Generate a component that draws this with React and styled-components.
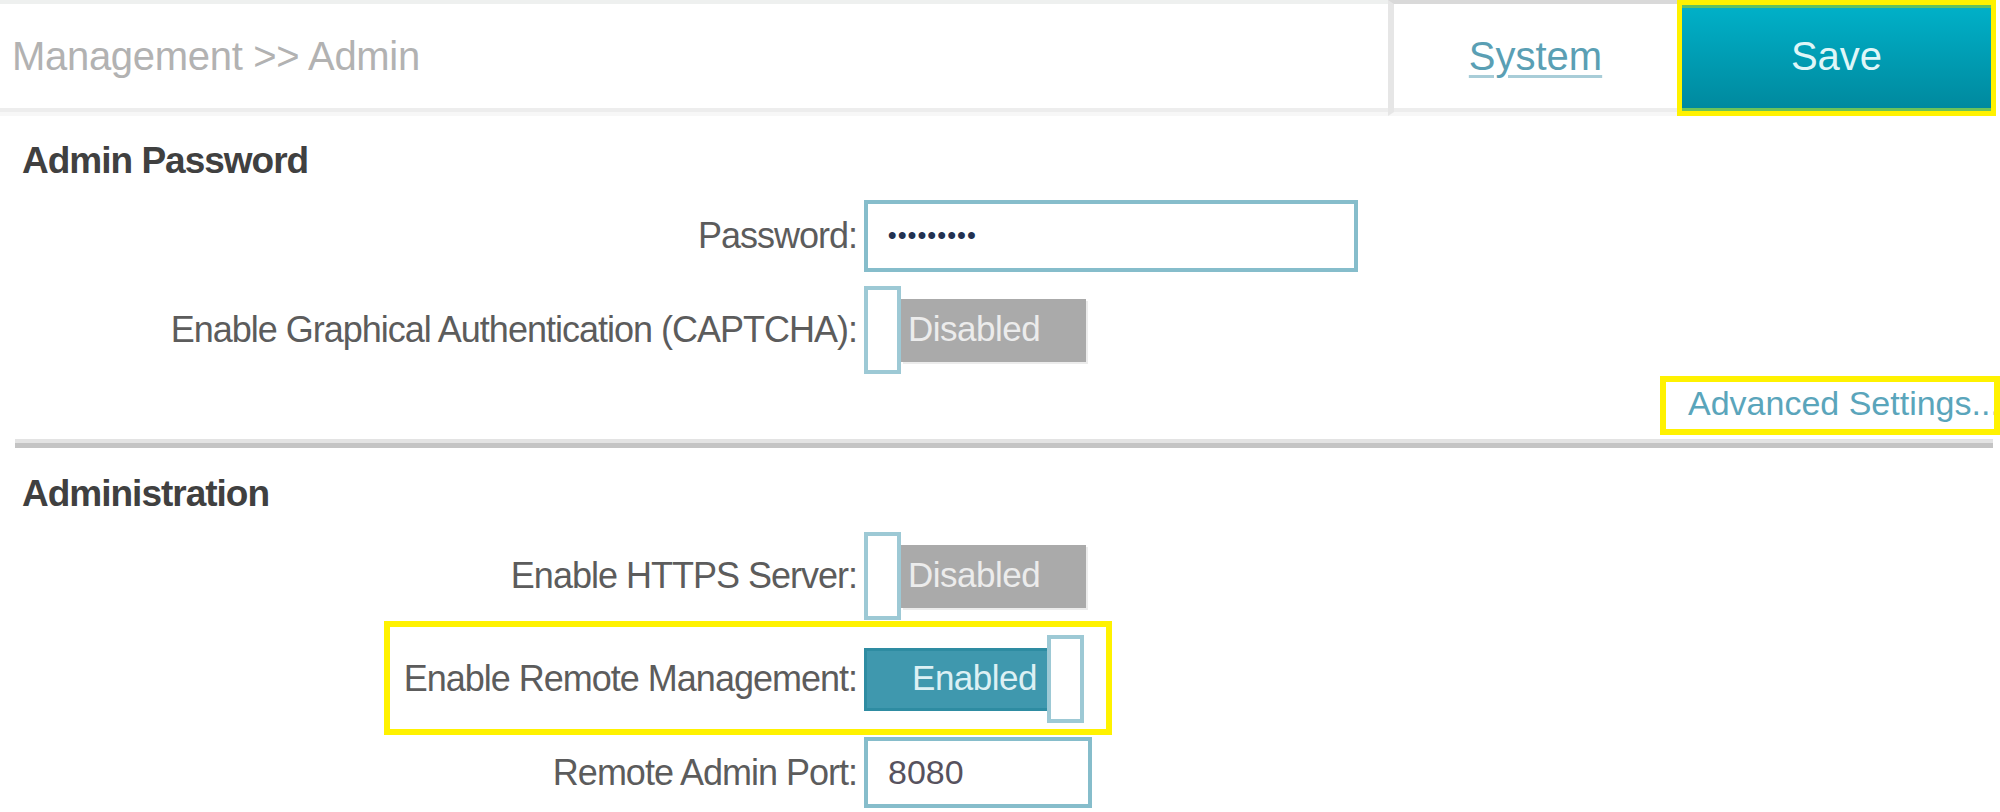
import React from "react";
import styled, { createGlobalStyle } from "styled-components";

const GlobalStyle = createGlobalStyle`
  * { box-sizing: border-box; }
  html, body { margin: 0; padding: 0; background: #fff; }
  body { font-family: "Liberation Sans", Arial, sans-serif; }
`;

const Page = styled.div`
  width: 2000px;
  height: 812px;
  overflow: hidden;
  background: #fff;
`;

const TopBar = styled.div`
  display: flex;
  height: 116px;
  padding-right: 4px;
`;

const Crumb = styled.div`
  flex: 1;
  display: flex;
  align-items: center;
  padding: 0 0 4px 12px;
  border-top: 4px solid #eef0ef;
  border-bottom: 4px solid #f7f7f7;
  box-shadow: inset 0 -4px 0 #ededed;
  font-size: 40px;
  color: #b2b2b2;
  letter-spacing: -0.3px;
`;

const SystemTab = styled.div`
  width: 289px;
  display: flex;
  align-items: center;
  justify-content: center;
  padding-bottom: 4px;
  border-top: 4px solid #d9d9d9;
  border-left: 6px solid #e6e6e6;
  border-bottom: 4px solid #f7f7f7;
  box-shadow: inset 0 -4px 0 #ededed;
`;

const TabLink = styled.a`
  font-size: 40px;
  color: #5a9fb4;
  text-decoration: underline;
  text-decoration-color: #a8cdd8;
  text-underline-offset: 5px;
  text-decoration-thickness: 3px;
`;

const SaveButton = styled.button`
  width: 319px;
  margin: 0;
  padding: 0 0 4px;
  border: 5px solid #fff200;
  background: linear-gradient(#00b1c9, #00889d);
  box-shadow: inset 0 3px 0 #62c15f, inset 0 -3px 0 #6cc35a;
  color: #dff6f8;
  font-family: inherit;
  font-size: 40px;
  cursor: pointer;
`;

const SectionTitle = styled.h2`
  margin: ${(p) => p.$top}px 0 0 22px;
  font-size: 37px;
  line-height: 40px;
  font-weight: bold;
  color: #404040;
  letter-spacing: -1px;
`;

const Row = styled.div`
  display: flex;
  align-items: center;
  margin-top: ${(p) => p.$top}px;
`;

const Label = styled.label`
  width: ${(p) => p.$w || 864}px;
  padding-right: 7px;
  text-align: right;
  font-size: 36px;
  letter-spacing: -1px;
  color: #5c5c5c;
  white-space: nowrap;
`;

const Field = styled.div`
  width: ${(p) => p.$w}px;
  height: ${(p) => p.$h}px;
  display: flex;
  align-items: center;
  padding-left: 20px;
  border: 4px solid #86bdcb;
  font-size: 34px;
  color: #57525e;
`;

const Dots = styled.span`
  font-size: 24px;
  font-weight: bold;
  letter-spacing: 1.5px;
  color: #233150;
  padding-bottom: 3px;
`;

const Toggle = styled.div`
  display: flex;
  align-items: center;
`;

const Knob = styled.span`
  position: relative;
  z-index: 1;
  flex: none;
  width: 37px;
  height: 88px;
  margin-left: ${(p) => (p.$on ? -5 : 0)}px;
  border: 4px solid #9dc9d5;
  background: #fff;
`;

const Track = styled.span`
  flex: none;
  width: ${(p) => (p.$on ? 188 : 185)}px;
  height: 63px;
  display: flex;
  align-items: center;
  justify-content: ${(p) => (p.$on ? "flex-end" : "flex-start")};
  padding: ${(p) => (p.$on ? "0 12px 2px 0" : "0 0 2px 7px")};
  background: ${(p) => (p.$on ? "#3f98ae" : "#aaaaaa")};
  border: ${(p) => (p.$on ? "3px solid #2e8ca2" : "none")};
  box-shadow: ${(p) => (p.$on ? "none" : "2px 2px 0 0 #ececec")};
  font-size: 35px;
  letter-spacing: -0.5px;
  color: ${(p) => (p.$on ? "#dcf0f4" : "#ececec")};
`;

const LinkRow = styled.div`
  display: flex;
  justify-content: flex-end;
  margin-top: 2px;
`;

const AdvBox = styled.div`
  width: 340px;
  height: 59px;
  display: flex;
  align-items: center;
  padding: 0 0 4px 22px;
  border: 6px solid #fff200;
  overflow: hidden;
  white-space: nowrap;
`;

const AdvLink = styled.a`
  font-size: 34px;
  color: #5aa5bb;
  text-decoration: none;
`;

const Divider = styled.hr`
  height: 9px;
  margin: 4px 7px 0 15px;
  border: none;
  border-top: 4px solid #e3e3e3;
  background: #c4c4c4;
`;

const Highlight = styled.div`
  display: flex;
  align-items: center;
  width: fit-content;
  margin: 1px 0 0 384px;
  padding: 8px 22px 6px 0;
  border: 6px solid #fff200;
`;

const Switch = ({ on }) => (
  <Toggle>
    {!on && <Knob />}
    <Track $on={on}>{on ? "Enabled" : "Disabled"}</Track>
    {on && <Knob $on />}
  </Toggle>
);

export default function App() {
  return (
    <Page>
      <GlobalStyle />
      <TopBar>
        <Crumb>Management &gt;&gt; Admin</Crumb>
        <SystemTab>
          <TabLink>System</TabLink>
        </SystemTab>
        <SaveButton>Save</SaveButton>
      </TopBar>

      <SectionTitle $top={25}>Admin Password</SectionTitle>
      <Row $top={19}>
        <Label>Password:</Label>
        <Field $w={494} $h={72}>
          <Dots>•••••••••</Dots>
        </Field>
      </Row>
      <Row $top={14}>
        <Label>Enable Graphical Authentication (CAPTCHA):</Label>
        <Switch on={false} />
      </Row>
      <LinkRow>
        <AdvBox>
          <AdvLink>Advanced Settings...</AdvLink>
        </AdvBox>
      </LinkRow>
      <Divider />

      <SectionTitle $top={26}>Administration</SectionTitle>
      <Row $top={18}>
        <Label>Enable HTTPS Server:</Label>
        <Switch on={false} />
      </Row>
      <Highlight>
        <Label $w={474}>Enable Remote Management:</Label>
        <Switch on />
      </Highlight>
      <Row $top={2}>
        <Label>Remote Admin Port:</Label>
        <Field $w={228} $h={71}>8080</Field>
      </Row>
    </Page>
  );
}
